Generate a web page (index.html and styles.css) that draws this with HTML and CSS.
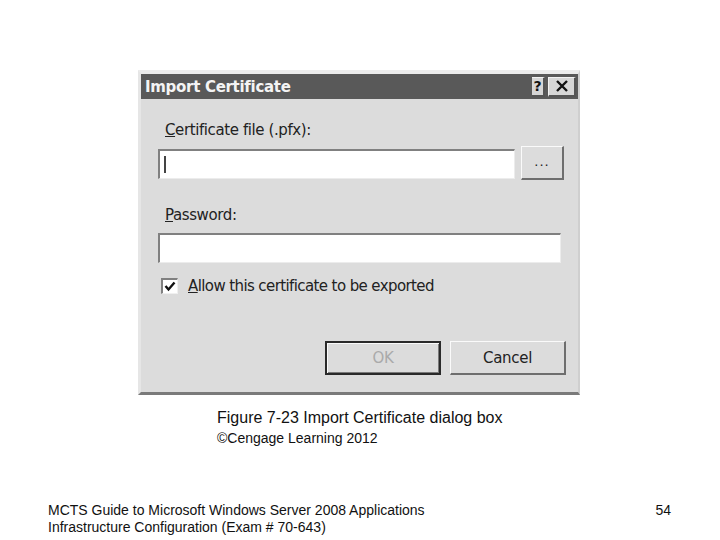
FILE: index.html
```html
<!DOCTYPE html>
<html>
<head>
<meta charset="utf-8">
<link rel="stylesheet" href="styles.css">
</head>
<body>
<div class="page">
  <div class="dialog">
    <div class="titlebar">
      <span class="title">Import Certificate</span>
      <div class="tbtns">
        <span class="tbtn">?</span>
        <span class="tbtn x">
          <svg width="14" height="12" viewBox="0 0 14 12"><path d="M2 1 L12 11 M12 1 L2 11" stroke="#111" stroke-width="2.4"/></svg>
        </span>
      </div>
    </div>
    <div class="content">
      <div class="label"><u>C</u>ertificate file (.pfx):</div>
      <div class="filerow">
        <div class="input file"><span class="caret"></span></div>
        <div class="btn browse">...</div>
      </div>
      <div class="label pw"><u>P</u>assword:</div>
      <div class="input password"></div>
      <div class="checkrow">
        <span class="checkbox">
          <svg width="12" height="11" viewBox="0 0 12 11"><path d="M1.5 5 L4.5 8.5 L10.5 1.5" stroke="#111" stroke-width="2.4" fill="none"/></svg>
        </span>
        <span class="checklabel"><u>A</u>llow this certificate to be exported</span>
      </div>
      <div class="buttons">
        <div class="btn ok">OK</div>
        <div class="btn cancel">Cancel</div>
      </div>
    </div>
  </div>
  <div class="caption">
    <div class="cap1">Figure 7-23 Import Certificate dialog box</div>
    <div class="cap2">©Cengage Learning 2012</div>
  </div>
  <div class="footer">
    <div class="ftext">MCTS Guide to Microsoft Windows Server 2008 Applications<br>Infrastructure Configuration (Exam # 70-643)</div>
    <div class="pnum">54</div>
  </div>
</div>
</body>
</html>
```
FILE: styles.css
```css
html, body {
  margin: 0;
  padding: 0;
  background: #ffffff;
}
.page {
  width: 720px;
  height: 540px;
  padding-top: 70px;
  box-sizing: border-box;
  font-family: "Liberation Sans", Arial, sans-serif;
  color: #111;
}
.dialog {
  margin-left: 138px;
  width: 442px;
  height: 325px;
  box-sizing: border-box;
  background: #dcdcdc;
  border-top: 4px solid #ececec;
  border-left: 3px solid #e6e6e6;
  border-right: 2px solid #cfcfcf;
  border-bottom: 3px solid #7a7a7a;
  display: flex;
  flex-direction: column;
}
.titlebar {
  height: 25px;
  background: #595959;
  display: flex;
  align-items: center;
  justify-content: space-between;
  padding-left: 4px;
}
.title {
  font-family: "DejaVu Sans", Verdana, sans-serif;
  font-weight: bold;
  font-size: 15px;
  color: #f4f4f4;
  letter-spacing: -0.3px;
}
.tbtns {
  display: flex;
  gap: 3px;
  padding-right: 2px;
}
.tbtn {
  width: 28px;
  height: 20px;
  box-sizing: border-box;
  background: #d6d6d6;
  border-top: 1px solid #f2f2f2;
  border-left: 1px solid #f2f2f2;
  border-right: 2px solid #555;
  border-bottom: 2px solid #555;
  display: flex;
  align-items: center;
  justify-content: center;
  font-family: "DejaVu Sans", sans-serif;
  font-weight: bold;
  font-size: 15px;
  color: #111;
}
.tbtn:first-child {
  width: 13px;
  border-left: none;
  font-size: 14px;
}
.content {
  flex: 1;
  padding: 21px 0 0 17px;
  font-family: "DejaVu Sans", Verdana, sans-serif;
  font-size: 15px;
  color: #222;
  display: flex;
  flex-direction: column;
}
.label {
  margin-left: 7px;
  height: 20px;
  line-height: 20px;
  letter-spacing: -0.4px;
}
.filerow {
  display: flex;
  gap: 6px;
  margin-top: 6px;
  align-items: flex-start;
}
.input {
  box-sizing: border-box;
  background: #fff;
  border-top: 2px solid #808080;
  border-left: 2px solid #808080;
  border-right: 1px solid #ececec;
  border-bottom: 1px solid #ececec;
  height: 30px;
  position: relative;
}
.input.file {
  width: 357px;
  margin-top: 3px;
}
.caret {
  position: absolute;
  left: 4px;
  top: 5px;
  width: 2px;
  height: 17px;
  background: #444;
}
.btn {
  box-sizing: border-box;
  background: #dcdcdc;
  border-top: 1px solid #fafafa;
  border-left: 1px solid #fafafa;
  border-right: 2px solid #6e6e6e;
  border-bottom: 2px solid #6e6e6e;
  display: flex;
  align-items: center;
  justify-content: center;
}
.browse {
  width: 43px;
  height: 34px;
  font-size: 13px;
  letter-spacing: 1px;
  padding-bottom: 2px;
}
.pw {
  margin-top: 25px;
}
.input.password {
  width: 403px;
  margin-top: 8px;
}
.checkrow {
  display: flex;
  align-items: center;
  margin-top: 14px;
  margin-left: 3px;
}
.checkbox {
  width: 17px;
  height: 16px;
  box-sizing: border-box;
  background: #fff;
  border-top: 2px solid #808080;
  border-left: 2px solid #808080;
  border-right: 1px solid #f0f0f0;
  border-bottom: 1px solid #f0f0f0;
  display: flex;
  align-items: center;
  justify-content: center;
}
.checklabel {
  margin-left: 10px;
  letter-spacing: -0.6px;
}
.buttons {
  display: flex;
  justify-content: flex-end;
  gap: 9px;
  margin-top: 46px;
  padding-right: 12px;
}
.ok, .cancel {
  width: 116px;
  height: 34px;
  letter-spacing: -0.3px;
}
.ok {
  color: #aaa;
  border: 2px solid #2a2a2a;
  box-shadow: inset 1px 1px 0 #fafafa, inset -1px -1px 0 #7a7a7a;
}
.caption {
  margin-left: 217px;
  margin-top: 13px;
}
.cap1 {
  font-size: 16px;
  line-height: 20px;
}
.cap2 {
  font-size: 14px;
  line-height: 20px;
}
.footer {
  display: flex;
  justify-content: space-between;
  align-items: flex-start;
  margin-top: 54px;
  padding: 0 49px 0 48px;
}
.ftext {
  font-size: 14px;
  line-height: 17px;
}
.pnum {
  font-size: 14px;
  line-height: 17px;
}
```
